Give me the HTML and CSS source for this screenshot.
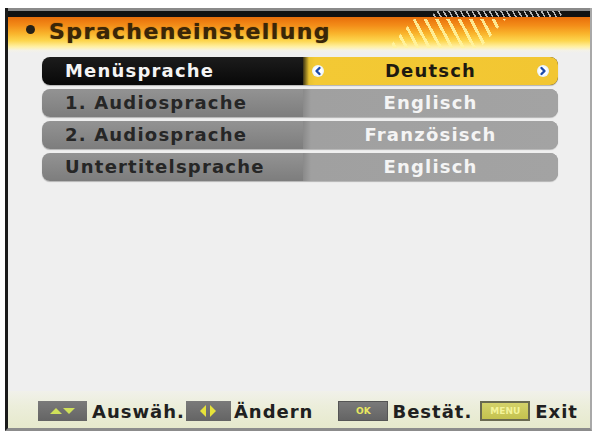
FILE: index.html
```html
<!DOCTYPE html>
<html lang="de">
<head>
<meta charset="utf-8">
<title>Spracheneinstellung</title>
<link rel="stylesheet" href="styles.css">
</head>
<body>
<div class="screen">
  <div class="topline"></div>
  <div class="band"><div class="band-hatch"></div></div>
  <div class="titlebar">
    <span class="dot"></span>
    <h1 class="title">Spracheneinstellung</h1>
    <div class="title-hatch"></div>
  </div>
  <div class="fade"></div>
  <div class="rows">
    <div class="row row-active">
      <div class="label">Menüsprache</div>
      <div class="value">
        <span class="arrow arrow-left"><svg viewBox="0 0 12 12" width="12" height="12"><path d="M7.5 3 L4.5 6 L7.5 9" fill="none" stroke="#1c4aa8" stroke-width="2.4" stroke-linecap="round" stroke-linejoin="round"/></svg></span>
        Deutsch
        <span class="arrow arrow-right"><svg viewBox="0 0 12 12" width="12" height="12"><path d="M4.5 3 L7.5 6 L4.5 9" fill="none" stroke="#1c4aa8" stroke-width="2.4" stroke-linecap="round" stroke-linejoin="round"/></svg></span>
      </div>
    </div>
    <div class="row">
      <div class="label">1. Audiosprache</div>
      <div class="value">Englisch</div>
    </div>
    <div class="row">
      <div class="label">2. Audiosprache</div>
      <div class="value">Französisch</div>
    </div>
    <div class="row">
      <div class="label">Untertitelsprache</div>
      <div class="value">Englisch</div>
    </div>
  </div>
  <div class="footer">
    <span class="key key-ud"><svg viewBox="0 0 49 20" width="49" height="20"><polygon points="12,13 18,7 24,13" fill="#cfe05a"/><polygon points="25,7 37,7 31,13" fill="#cfe05a"/></svg></span>
    <span class="ftxt ftxt-1">Auswäh.</span>
    <span class="key key-lr"><svg viewBox="0 0 45 20" width="45" height="20"><polygon points="20,4 20,16 14,10" fill="#e6e23a"/><polygon points="24,4 24,16 30,10" fill="#e6e23a"/></svg></span>
    <span class="ftxt ftxt-2">Ändern</span>
    <span class="key key-ok"><span class="keytxt">OK</span></span>
    <span class="ftxt ftxt-3">Bestät.</span>
    <span class="key key-menu"><span class="keytxt">MENU</span></span>
    <span class="ftxt">Exit</span>
  </div>
</div>
</body>
</html>
```
FILE: styles.css
```css
html, body {
  margin: 0;
  padding: 0;
  background: #ffffff;
}
body {
  width: 598px;
  height: 434px;
  overflow: hidden;
  font-family: "DejaVu Sans", "Liberation Sans", sans-serif;
  font-weight: bold;
}
.screen {
  position: relative;
  margin: 8px 0 0 5px;
  width: 582px;
  height: 420px;
  border-left: 3px solid #1a1a1a;
  border-right: 2px solid #a8a8a8;
  border-bottom: 3px solid #8c8c8c;
  background: #efefef;
  display: flex;
  flex-direction: column;
}
.topline {
  height: 3px;
  background: #8a8a8a;
}
.band {
  position: relative;
  height: 6px;
  background: #121212;
}
.band-hatch {
  position: absolute;
  left: 424px;
  top: 0;
  width: 132px;
  height: 6px;
  background: repeating-linear-gradient(60deg, transparent 0 2px, #b8b8b8 2px 3.5px, transparent 3.5px 5px);
  clip-path: polygon(2% 0, 100% 0, 97% 100%, 0 100%);
}
.titlebar {
  position: relative;
  height: 33px;
  display: flex;
  align-items: center;
  padding-left: 18px;
  padding-bottom: 3px;
  box-sizing: border-box;
  background: linear-gradient(#e86e0a 0%, #f38c18 25%, #f9b42c 50%, #fdd64e 72%, #fff0a4 90%, #f6f2de 100%);
}
.dot {
  width: 9px;
  height: 9px;
  border-radius: 50%;
  background: #252018;
  margin-right: 14px;
  margin-top: -6px;
}
.title {
  margin: 0;
  font-size: 22px;
  line-height: 26px;
  letter-spacing: 1.4px;
  color: #3a2608;
  text-shadow: 0 0 1px rgba(60, 30, 0, 0.7);
  font-weight: bold;
}
.title-hatch {
  position: absolute;
  left: 380px;
  top: 2px;
  width: 118px;
  height: 29px;
  background: repeating-linear-gradient(62deg, transparent 0 5px, #fff4a0 5px 8px, transparent 8px 10px);
  clip-path: polygon(22% 0, 100% 0, 78% 100%, 0 100%);
  opacity: 0.9;
}
.fade {
  height: 3px;
  background: linear-gradient(#f4f2e6, #efefef);
}
.rows {
  margin-top: 4px;
  padding-left: 34px;
  display: flex;
  flex-direction: column;
  gap: 4px;
}
.row {
  display: flex;
  width: 516px;
  height: 28px;
  border-radius: 8px;
  background: linear-gradient(#939393, #7d7d7d);
  font-size: 18px;
  line-height: 28px;
  letter-spacing: 1.2px;
  box-shadow: 0 1px 1px rgba(0, 0, 0, 0.25);
}
.label {
  width: 238px;
  padding-left: 23px;
  color: #262626;
  white-space: nowrap;
}
.value {
  position: relative;
  flex: 1;
  text-align: center;
  color: #f4f4f4;
  border-radius: 0 8px 8px 0;
  background: linear-gradient(90deg, #8a8a8a 0px, #a0a0a0 8px, #a3a3a3 100%);
  white-space: nowrap;
}
.row-active {
  background: linear-gradient(#1c1c1c, #080808);
}
.row-active .label {
  color: #f4f4f4;
}
.row-active .value {
  color: #1e1a10;
  background: linear-gradient(90deg, #3a3214 0px, #e8c230 6px, #f3c934 12px, #f2c632 100%);
}
.arrow {
  position: absolute;
  top: 8px;
  width: 12px;
  height: 12px;
  border-radius: 50%;
  background: radial-gradient(#ffffff 40%, #cfe4f4 100%);
  display: flex;
}
.arrow-left {
  left: 9px;
}
.arrow-right {
  right: 9px;
}
.footer {
  margin-top: auto;
  height: 37px;
  box-sizing: border-box;
  padding: 3px 0 0 30px;
  display: flex;
  align-items: center;
  background: linear-gradient(#f1f1ea 0%, #eceedb 40%, #e6e9cc 100%);
  font-size: 18px;
  letter-spacing: 1px;
  color: #202020;
}
.key {
  height: 20px;
  box-sizing: border-box;
  display: flex;
  align-items: center;
  justify-content: center;
  background: linear-gradient(#7a7a7a, #646464);
  border: 1px solid #555555;
}
.key svg {
  display: block;
}
.key-ud {
  width: 49px;
  border: none;
}
.key-lr {
  width: 45px;
  margin-left: 1px;
  border: none;
}
.key-ok {
  width: 50px;
  margin-left: 25px;
}
.key-menu {
  width: 50px;
  margin-left: 8px;
  background: linear-gradient(#d4d26a, #c4c24e);
  border: 2px solid #6a6a50;
}
.keytxt {
  font-size: 9px;
  letter-spacing: 0;
  color: #e8e860;
}
.key-menu .keytxt {
  color: #f4f49a;
}
.ftxt {
  margin-left: 5px;
  white-space: nowrap;
}
.ftxt-1 {
  margin-left: 5px;
}
.ftxt-2 {
  margin-left: 3px;
}
.ftxt-3 {
  margin-left: 4px;
}
```
